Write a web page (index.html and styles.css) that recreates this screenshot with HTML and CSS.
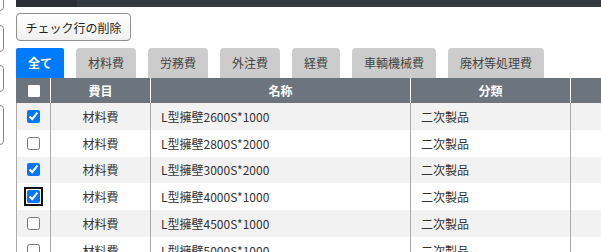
FILE: index.html
```html
<!DOCTYPE html>
<html lang="ja">
<head>
	<meta charset="UTF-8">
	<title>費目一覧</title>
	<link rel="stylesheet" href="styles.css">
</head>
<body>
	<div class="page">
		<div class="side">
			<div class="side-box box-1"></div>
			<div class="side-box box-2"></div>
			<div class="side-box box-3"></div>
			<div class="side-box box-4"></div>
		</div>
		<div class="main">
			<div class="topbar">
				<div class="topbar-item"></div>
			</div>
			<button class="btn-del" type="button">チェック行の削除</button>
			<ul class="tabs">
				<li class="tab active">全て</li>
				<li class="tab">材料費</li>
				<li class="tab">労務費</li>
				<li class="tab">外注費</li>
				<li class="tab">経費</li>
				<li class="tab">車輌機械費</li>
				<li class="tab">廃材等処理費</li>
			</ul>
			<table class="list">
				<thead>
					<tr>
						<th class="col-chk"><span class="chk-head"></span></th>
						<th class="col-kind">費目</th>
						<th class="col-name">名称</th>
						<th class="col-cat">分類</th>
						<th class="col-more"></th>
					</tr>
				</thead>
				<tbody>
					<tr>
						<td class="col-chk"><input type="checkbox" checked></td>
						<td class="col-kind">材料費</td>
						<td class="col-name">L型擁壁2600S*1000</td>
						<td class="col-cat">二次製品</td>
						<td></td>
					</tr>
					<tr>
						<td class="col-chk"><input type="checkbox"></td>
						<td class="col-kind">材料費</td>
						<td class="col-name">L型擁壁2800S*2000</td>
						<td class="col-cat">二次製品</td>
						<td></td>
					</tr>
					<tr>
						<td class="col-chk"><input type="checkbox" checked></td>
						<td class="col-kind">材料費</td>
						<td class="col-name">L型擁壁3000S*2000</td>
						<td class="col-cat">二次製品</td>
						<td></td>
					</tr>
					<tr>
						<td class="col-chk"><input class="focused" type="checkbox" checked></td>
						<td class="col-kind">材料費</td>
						<td class="col-name">L型擁壁4000S*1000</td>
						<td class="col-cat">二次製品</td>
						<td></td>
					</tr>
					<tr>
						<td class="col-chk"><input type="checkbox"></td>
						<td class="col-kind">材料費</td>
						<td class="col-name">L型擁壁4500S*1000</td>
						<td class="col-cat">二次製品</td>
						<td></td>
					</tr>
					<tr>
						<td class="col-chk"><input type="checkbox"></td>
						<td class="col-kind">材料費</td>
						<td class="col-name">L型擁壁5000S*1000</td>
						<td class="col-cat">二次製品</td>
						<td></td>
					</tr>
				</tbody>
			</table>
		</div>
	</div>
</body>
</html>
```

FILE: styles.css
```css
*{
	margin: 0;
	padding: 0;
	box-sizing: border-box;
}
html,body{
	overflow: hidden;
}
body{
	font-family: "Noto Sans CJK JP", "Noto Sans", sans-serif;
	font-size: 12px;
	color: #333;
	background: #fff;
}
ul{
	list-style: none;
}
.page{
	display: flex;
	gap: 12px;
}
/* 左側の入力欄（はみ出し部分） */
.side{
	flex: 0 0 4px;
	overflow: hidden;
	margin-top: -16px;
}
.side-box{
	width: 20px;
	margin-left: -16px;
	border: 1px solid #8a8a8a;
	border-radius: 4px;
}
.box-1{
	height: 27px;
	margin-bottom: 14px;
}
.box-2{
	height: 27px;
	margin-bottom: 13px;
}
.box-3{
	height: 27px;
	margin-bottom: 13px;
}
.box-4{
	height: 40px;
}
.main{
	flex: 1;
	min-width: 0;
}
.topbar{
	height: 7px;
	background-color: #343a40;
}
.topbar-item{
	width: 61px;
	height: 100%;
	background-color: #2b2f34;
}
.btn-del{
	display: block;
	margin-top: 6px;
	width: 115px;
	height: 28px;
	border: 1px solid #8f8f8f;
	border-radius: 4px;
	background: linear-gradient(#fff, #f0f0f0);
	font-family: inherit;
	font-size: 12px;
	color: #222;
}
.tabs{
	display: flex;
	gap: 12px;
	margin-top: 7px;
}
.tab{
	height: 30px;
	padding: 0 12px;
	line-height: 30px;
	background-color: #ccc;
	border-radius: 4px 4px 0 0;
	color: #444;
}
.tab.active{
	background-color: #007bff;
	color: #fff;
	font-weight: bold;
	border-radius: 2px 2px 0 0;
}
.list{
	width: 640px;
	border-collapse: collapse;
	table-layout: fixed;
}
.list th{
	height: 25px;
	background-color: #6c757d;
	color: #fff;
	font-weight: bold;
	border-left: 1px solid #fff;
	text-align: center;
}
.list th:first-child{
	border-left-color: #6c757d;
}
.list td{
	height: 26.8px;
	border-left: 1px solid #aaa;
	border-right: 1px solid #aaa;
	padding: 0 10px;
	white-space: nowrap;
}
.list tbody tr:nth-child(odd){
	background-color: #f2f2f2;
}
.col-chk{
	width: 34px;
}
.list td.col-chk{
	padding: 0;
	text-align: center;
}
.col-kind{
	width: 100px;
}
.list td.col-kind{
	text-align: center;
}
.col-name{
	width: 260px;
}
.col-cat{
	width: 160px;
}
.chk-head{
	display: inline-block;
	width: 12px;
	height: 12px;
	margin-top: 3px;
	background: #fff;
	border-radius: 1px;
}
.list input{
	display: block;
	width: 13px;
	height: 13px;
	margin: 0 auto;
	accent-color: #0075ff;
}
.list input.focused{
	outline: 2px solid #101010;
	outline-offset: 1px;
	border-radius: 2px;
}
```
